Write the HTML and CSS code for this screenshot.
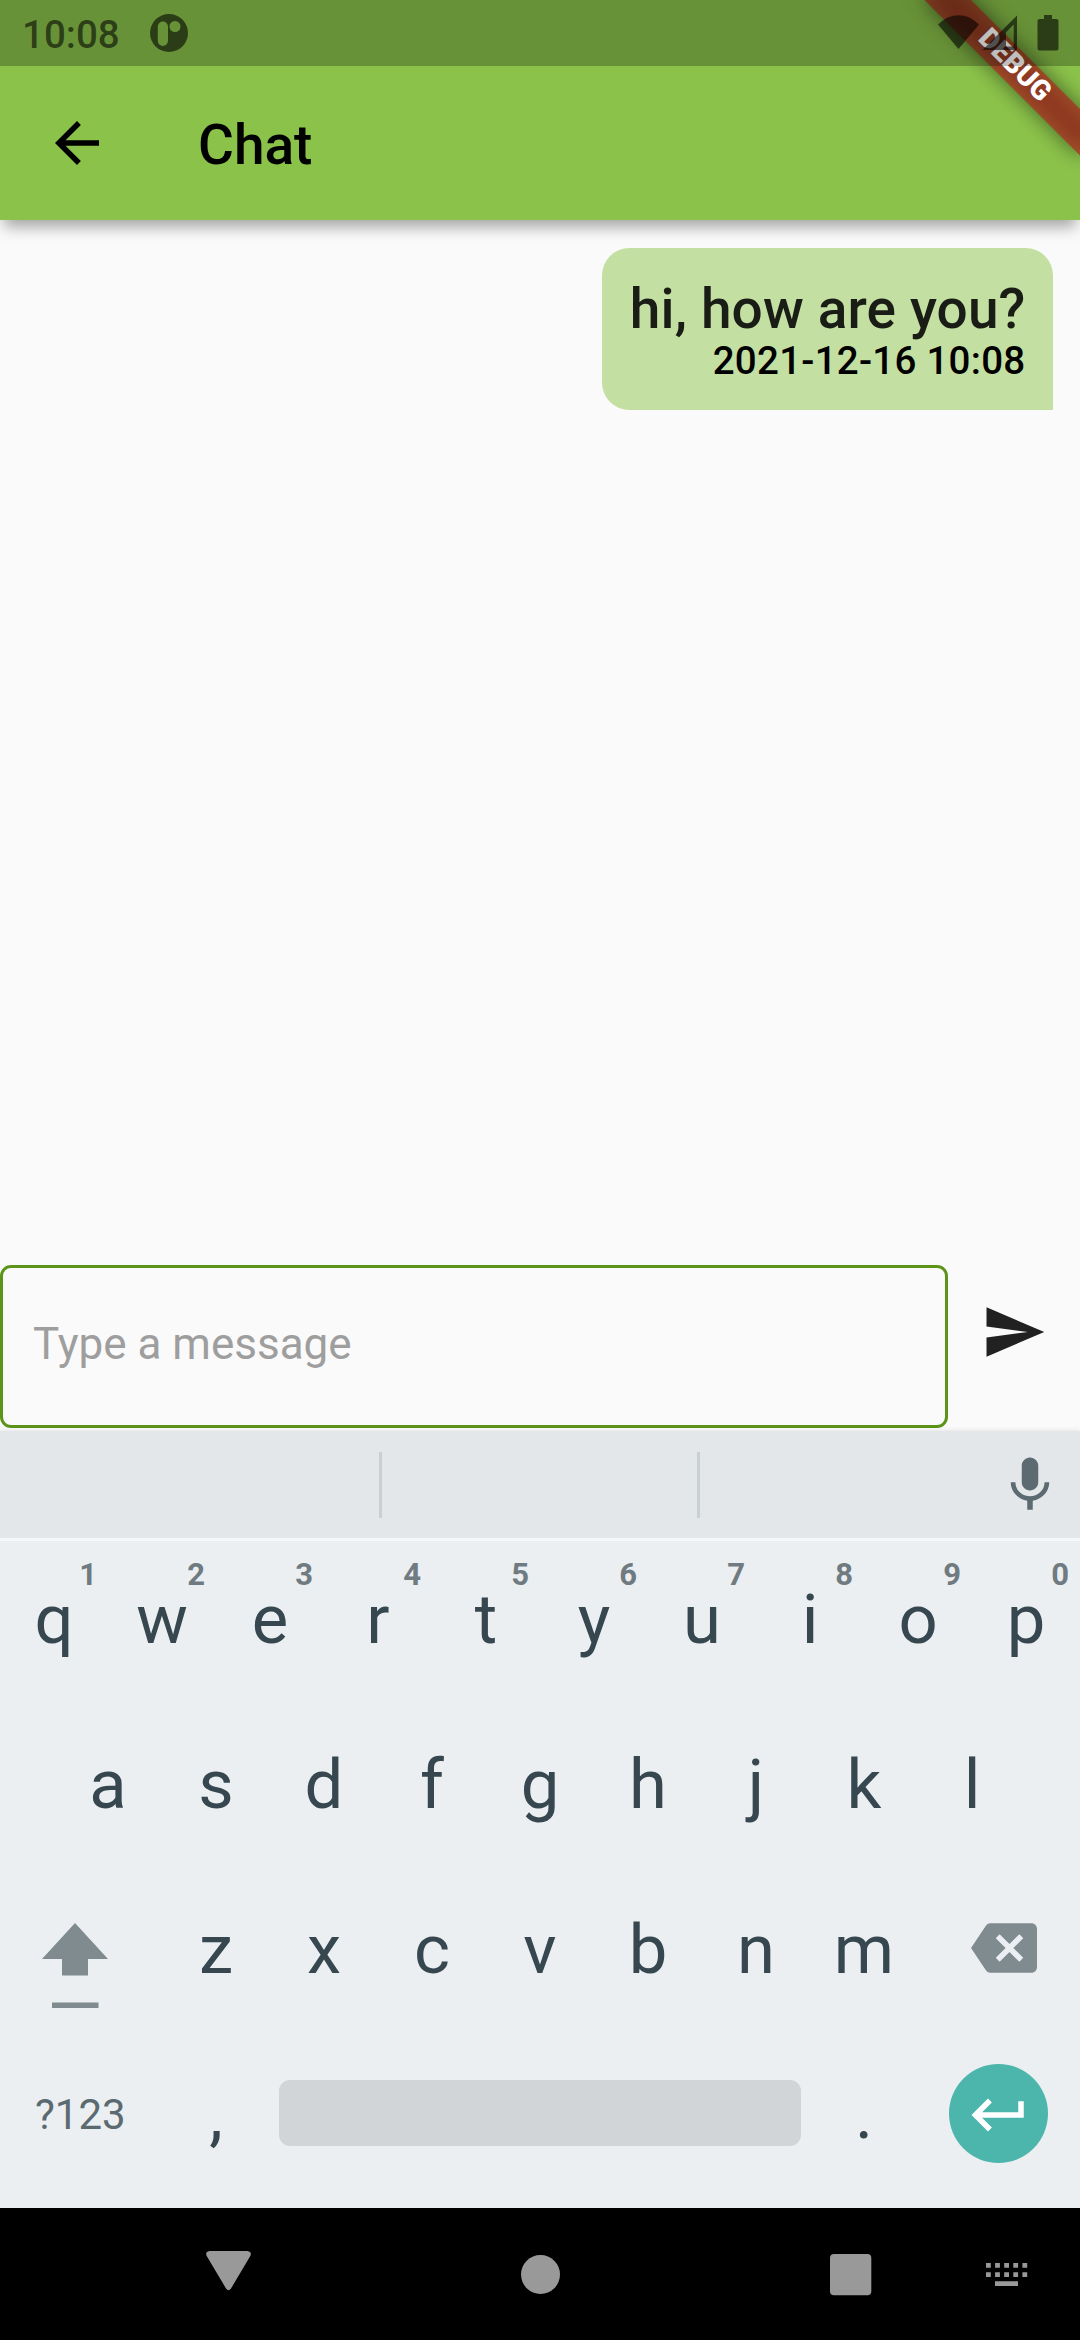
FILE: index.html
```html
<!DOCTYPE html>
<html lang="en">
<head>
<meta charset="utf-8">
<title>Chat</title>
<link rel="stylesheet" href="styles.css">
</head>
<body>
<div class="screen">
  <header class="top">
    <div class="debug"><div class="ribbon">DEBUG</div></div>
    <div class="status">
      <span class="clock">10:08</span>
      <svg class="notif" viewBox="0 0 38 38"><path fill-rule="evenodd" d="M19 0a19 19 0 1 1 0 38a19 19 0 0 1 0-38zM12.900 7.500a5.100 5.100 0 0 0-5.100 5.100v14.200a5.100 5.100 0 0 0 10.200 0v-14.200a5.100 5.100 0 0 0-5.100-5.100zM25 7a5.500 5.500 0 1 0 0 11a5.500 5.500 0 0 0 0-11z"/></svg>
      <span class="grow"></span>
      <svg class="sysicons" viewBox="0 0 122 36"><path d="M0 9.500Q9 .3 20.500.3T41 9.500L20.500 34z"/><path fill-rule="evenodd" d="M79 .5V35H44.500zM75.700 9.500L68 17.200V31.500h7.700z"/><path d="M106 0h8v4h4.500a2 2 0 0 1 2 2v27.500a2 2 0 0 1-2 2h-17a2 2 0 0 1-2-2V6a2 2 0 0 1 2-2h4.500z"/></svg>
    </div>
    <div class="appbar">
      <svg class="icon" viewBox="0 0 24 24"><path d="M20 11H7.830l5.590-5.590L12 4l-8 8 8 8 1.410-1.410L7.830 13H20z"/></svg>
      <h1 class="title">Chat</h1>
    </div>
  </header>

  <main class="chat">
    <div class="bubble">
      <p class="text">hi, how are you?</p>
      <time class="time">2021-12-16 10:08</time>
    </div>
  </main>

  <div class="composer">
    <div class="field">Type a message</div>
    <svg class="icon send" viewBox="0 0 24 24"><path d="M2.010 21L23 12 2.010 3 2 10l15 2-15 2z"/></svg>
  </div>

  <section class="keyboard">
    <div class="suggest">
      <i></i><i></i>
      <svg class="icon mic" viewBox="0 0 24 24"><path d="M12 14c1.660 0 3-1.340 3-3V5c0-1.660-1.340-3-3-3S9 3.340 9 5v6c0 1.660 1.340 3 3 3zm5.300-3c0 3-2.540 5.100-5.300 5.100S6.700 14 6.700 11H5c0 3.410 2.720 6.230 6 6.720V21h2v-3.280c3.280-.48 6-3.300 6-6.720z"/></svg>
    </div>
    <div class="rows">
      <div class="row"><b>q<sup>1</sup></b><b>w<sup>2</sup></b><b>e<sup>3</sup></b><b>r<sup>4</sup></b><b>t<sup>5</sup></b><b>y<sup>6</sup></b><b>u<sup>7</sup></b><b>i<sup>8</sup></b><b>o<sup>9</sup></b><b>p<sup>0</sup></b></div>
      <div class="row"><b>a</b><b>s</b><b>d</b><b>f</b><b>g</b><b>h</b><b>j</b><b>k</b><b>l</b></div>
      <div class="row">
        <span class="side shift"><svg viewBox="0 0 66 86"><path d="M33 0L66 36H46V52.500H20V36H0zM10 79.500h46.500v5.500H10z"/></svg></span>
        <b>z</b><b>x</b><b>c</b><b>v</b><b>b</b><b>n</b><b>m</b>
        <span class="side back"><svg class="icon" viewBox="0 0 24 24"><path d="M22 3H7c-.690 0-1.230.350-1.590.880L0 12l5.410 8.110c.360.530.900.890 1.590.890h15c1.100 0 2-.900 2-2V5c0-1.100-.900-2-2-2zm-3 12.590L17.590 17 14 13.410 10.410 17 9 15.590 12.590 12 9 8.410 10.410 7 14 10.590 17.590 7 19 8.410 15.410 12z"/></svg></span>
      </div>
      <div class="row">
        <span class="side sym">?123</span>
        <b>,</b>
        <span class="space"><i></i></span>
        <b>.</b>
        <span class="side enter"><span class="disc"><svg class="icon" viewBox="0 0 24 24"><path d="M19 7v4H5.830l3.580-3.590L8 6l-6 6 6 6 1.410-1.410L5.830 13H21V7z"/></svg></span></span>
      </div>
    </div>
  </section>

  <nav class="nav">
    <svg viewBox="0 0 1080 132"><path d="M209.500 43h38q5 1 2.500 5.500L231 80.500q-2.500 3.500-5 0L207 48.500Q204.500 44 209.500 43z"/><circle cx="540.500" cy="66.500" r="19.500"/><rect x="830" y="46" width="41.300" height="41.300" rx="4"/><path d="M986 55h4.800v4.800h-4.800zm9.100 0h4.800v4.800h-4.800zm9.100 0h4.800v4.800h-4.800zm9.100 0h4.800v4.800h-4.800zm9.100 0h4.800v4.800h-4.800zM986 64.200h4.800v4.800h-4.800zm9.100 0h4.800v4.800h-4.800zm9.100 0h4.800v4.800h-4.800zm9.100 0h4.800v4.800h-4.800zm9.100 0h4.800v4.800h-4.800zM995 73.300h23v4.700h-23z"/></svg>
  </nav>
</div>
</body>
</html>
```
FILE: styles.css
```css
* { box-sizing: border-box; margin: 0; padding: 0; }
body { font-family: Roboto, sans-serif; background: #fafafa; }
.screen { width: 1080px; height: 2340px; display: flex; flex-direction: column; overflow: hidden; }
svg { display: block; flex: none; }
.icon { width: 66px; height: 66px; }
.grow { flex: 1; }

.top { position: relative; height: 220px; flex: none; background: #8bc34a; box-shadow: 0 11px 14px -4px rgba(0, 0, 0, .34); }
.debug { position: absolute; top: 0; right: 0; width: 220px; height: 220px; overflow: hidden; }
.ribbon {
  position: absolute; left: 110px; top: 77px; width: 220px; height: 33px;
  transform-origin: 110px -77px; transform: rotate(45deg);
  color: #fff; font-size: 28px; font-weight: 900; line-height: 30px; text-align: center;
}
.ribbon::before, .ribbon::after { content: ""; position: absolute; inset: 0; z-index: -1; }
.ribbon::before { background: rgba(0, 0, 0, .5); filter: blur(10.900px); }
.ribbon::after { background: rgba(183, 28, 28, .627); }
.status { position: relative; height: 66px; display: flex; align-items: center; padding: 0 20px 0 22px; background: rgba(0, 0, 0, .25); }
.status svg { fill: rgba(0, 0, 0, .58); }
.clock { font-size: 38.500px; font-weight: 500; line-height: 66px; margin-top: 4px; width: 128px; color: rgba(0, 0, 0, .58); }
.notif { width: 38px; height: 38px; }
.sysicons { width: 122px; height: 36px; }
.appbar { height: 154px; display: flex; align-items: center; padding-left: 44px; gap: 88px; }
.title { padding-top: 4px; font-size: 55px; font-weight: 500; }

.chat { flex: 1; display: flex; justify-content: flex-end; align-items: flex-start; padding: 27.500px 27px; }
.bubble { display: flex; flex-direction: column; align-items: flex-end; padding: 27.500px; height: 162.500px; background: #c4dfa2; border-radius: 27.500px 27.500px 0 27.500px; white-space: nowrap; }
.text { padding-top: 3px; font-size: 55px; font-weight: 500; line-height: 63px; letter-spacing: .13px; color: rgba(0, 0, 0, .87); }
.time { font-size: 38.500px; font-weight: 500; line-height: 40px; letter-spacing: .27px; }

.composer { height: 163px; flex: none; display: flex; align-items: flex-start; margin-bottom: 3px; }
.field { width: 948px; height: 163px; border: 3px solid #5b9419; border-radius: 11px; padding-left: 30px; font-size: 44px; line-height: 153px; color: #9e9e9e; }
.send { margin: 34px 0 0 33px; fill: #212121; }

.keyboard { height: 777px; flex: none; background: #ebeff2; box-shadow: 0 0 5px rgba(0, 0, 0, .12); }
.suggest { height: 110px; display: flex; align-items: center; padding-top: 1px; background: #e3e7ea; border-bottom: 3px solid #f5f7f9; }
.suggest i { width: 3px; height: 66px; background: #cacfd2; }
.suggest i:first-child { margin-left: 379px; }
.suggest i + i { margin-left: 315px; }
.mic { margin-left: 297px; fill: #5c6a71; }
.rows { margin-top: -4px; }
.row { height: 165px; display: flex; justify-content: center; }
.row b { position: relative; width: 108px; font-size: 68.750px; font-weight: 400; line-height: 165px; text-align: center; color: #37474f; }
.row sup { position: absolute; top: 20px; right: 11px; font-size: 31px; font-weight: 700; line-height: 36px; color: #6f7b80; }
.side { width: 162px; height: 165px; display: flex; align-items: center; }
.shift { padding: 33px 0 0 42px; }
.shift svg { width: 66px; height: 86px; }
.shift svg, .back svg { fill: #808b90; }
.back { padding: 0 0 3px 53px; }
.sym { padding-left: 35px; font-size: 42px; color: #5b6a71; }
.space { width: 540px; display: flex; align-items: center; padding: 0 0 3px 9px; }
.space i { width: 522px; height: 66px; border-radius: 11px; background: #d1d5d8; }
.enter { padding: 0 0 2px 31px; }
.disc { width: 99px; height: 99px; border-radius: 50%; background: #4db6ac; display: grid; place-items: center; padding-top: 3px; }
.disc svg { fill: #fff; }

.nav { height: 132px; flex: none; background: #000; }
.nav svg { width: 1080px; height: 132px; fill: #999; }
```
